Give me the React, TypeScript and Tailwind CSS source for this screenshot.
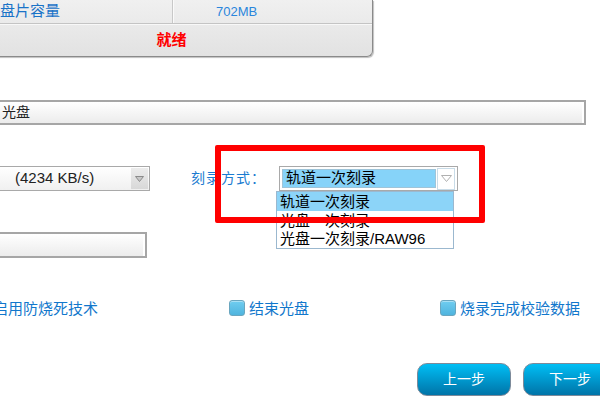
import React from "react";

const cjk = { fontFamily: '"Liberation Sans", "Noto Sans CJK SC", sans-serif' } as const;

function Check({ label }: { label: string }) {
  return (
    <div className="flex items-center gap-[4px]">
      <div className="w-[16px] h-[16px] rounded-[3px] border border-[#6aa6bf] bg-gradient-to-b from-[#6fcdf0] to-[#4fb4de] shadow-[inset_0_1px_0_rgba(255,255,255,0.4)]" />
      <span className="text-[15px] leading-none text-[#1177cc]">{label}</span>
    </div>
  );
}

export default function App() {
  return (
    <div className="relative w-[600px] h-[400px] overflow-hidden bg-white" style={cjk}>
      {/* top status table */}
      <div className="ml-[-29px] w-[402px] h-[57px] flex flex-col rounded-br-[6px] border-r border-b border-[#8a8a8a] bg-gradient-to-b from-[#f0f0f0] to-[#e2e2e2] shadow-[1px_1px_1px_rgba(0,0,0,0.25)]">
        <div className="h-[24px] flex border-b border-[#c4c4c4] shadow-[0_1px_0_#f8f8f8]">
          <div className="w-[202px] pl-[29px] flex items-center border-r border-[#c8c8c8] shadow-[1px_0_0_#fafafa] text-[15px] text-[#1a73c8]">
            盘片容量
          </div>
          <div className="flex-1 pl-[43px] flex items-center text-[13px] text-[#2a86dc]">702MB</div>
        </div>
        <div className="flex-1 flex items-center justify-center text-[15px] font-bold text-[#ff0000]">就绪</div>
      </div>

      {/* disc name input */}
      <div className="mt-[43px] ml-[-10px] w-[596px] h-[25px] flex items-center pl-[10px] border-2 border-[#a6a6a6] bg-gradient-to-b from-white to-[#ececec] shadow-[inset_-2px_0_0_#ffffff] text-[14px] text-[#222]">
        光盘
      </div>

      {/* speed / mode row */}
      <div className="mt-[41px] flex items-center h-[25px]">
        <div className="ml-[-20px] w-[170px] h-[25px] flex items-center border border-[#a9a9a9] bg-gradient-to-b from-white to-[#f0f0f0]">
          <span className="ml-[34px] flex-1 text-[15px] text-[#222]">(4234 KB/s)</span>
          <div className="w-[17px] h-[21px] mr-[1px] flex items-center justify-center bg-gradient-to-b from-[#ececec] to-[#d8d8d8]">
            <svg width="9" height="6" viewBox="0 0 9 6"><path d="M0.5 0.5 H8.5 L4.5 5.5 Z" fill="#c8c8c8" stroke="#8a8a8a" strokeWidth="1" /></svg>
          </div>
        </div>
        <span className="ml-[41px] text-[14px] text-[#1a7bd0] tracking-[1px]">刻录方式：</span>
        <div className="ml-[13px] w-[179px] h-[25px] flex items-center border border-[#a9a9a9] bg-white p-[2px]">
          <div className="flex-1 h-[19px] flex items-center pl-[3px] bg-[#86d3f9] border border-[#9fc4d8] text-[15px] text-black">轨道一次刻录</div>
          <div className="ml-[1px] w-[18px] h-[22px] flex items-center justify-center border border-[#c9dce8] bg-white">
            <svg width="11" height="7" viewBox="0 0 11 7"><path d="M0.5 0.5 H10.5 L5.5 6.5 Z" fill="white" stroke="#b0b0b0" strokeWidth="1" /></svg>
          </div>
        </div>
      </div>

      {/* empty input */}
      <div className="mt-[41px] ml-[-10px] w-[157px] h-[26px] border-2 border-[#a6a6a6] bg-gradient-to-b from-white to-[#ececec] shadow-[inset_-2px_0_0_#ffffff]" />

      {/* checkbox row */}
      <div className="mt-[42px] flex items-center h-[16px]">
        <span className="ml-[-7px] w-[236px] text-[15px] leading-none text-[#1177cc]">启用防烧死技术</span>
        <div className="w-[211px]"><Check label="结束光盘" /></div>
        <Check label="烧录完成校验数据" />
      </div>

      {/* buttons */}
      <div className="mt-[47px] flex gap-[12px] ml-[417px]">
        <button className="w-[94px] h-[33px] shrink-0 rounded-[10px] border border-[#7c8a9a] bg-gradient-to-b from-[#00bff5] to-[#0074a8] text-white text-[14px]">上一步</button>
        <button className="w-[94px] h-[33px] shrink-0 rounded-[10px] border border-[#7c8a9a] bg-gradient-to-b from-[#00bff5] to-[#0074a8] text-white text-[14px]">下一步</button>
      </div>

      {/* dropdown list overlay */}
      <div className="absolute left-[276px] top-[191px] w-[178px] h-[58px] border border-[#9bb8cf] bg-white flex flex-col text-[15px] text-black">
        <div className="h-[19px] flex items-center pl-[3px] bg-[#8cd4f8] leading-none">轨道一次刻录</div>
        <div className="h-[19px] flex items-center pl-[3px] leading-none">光盘一次刻录</div>
        <div className="h-[19px] flex items-center pl-[3px] leading-none">光盘一次刻录/RAW96</div>
      </div>

      {/* red annotation rectangle */}
      <div className="absolute left-[215px] top-[145px] w-[270px] h-[78px] border-[6px] border-[#ff0000] rounded-[2px]" />
    </div>
  );
}
